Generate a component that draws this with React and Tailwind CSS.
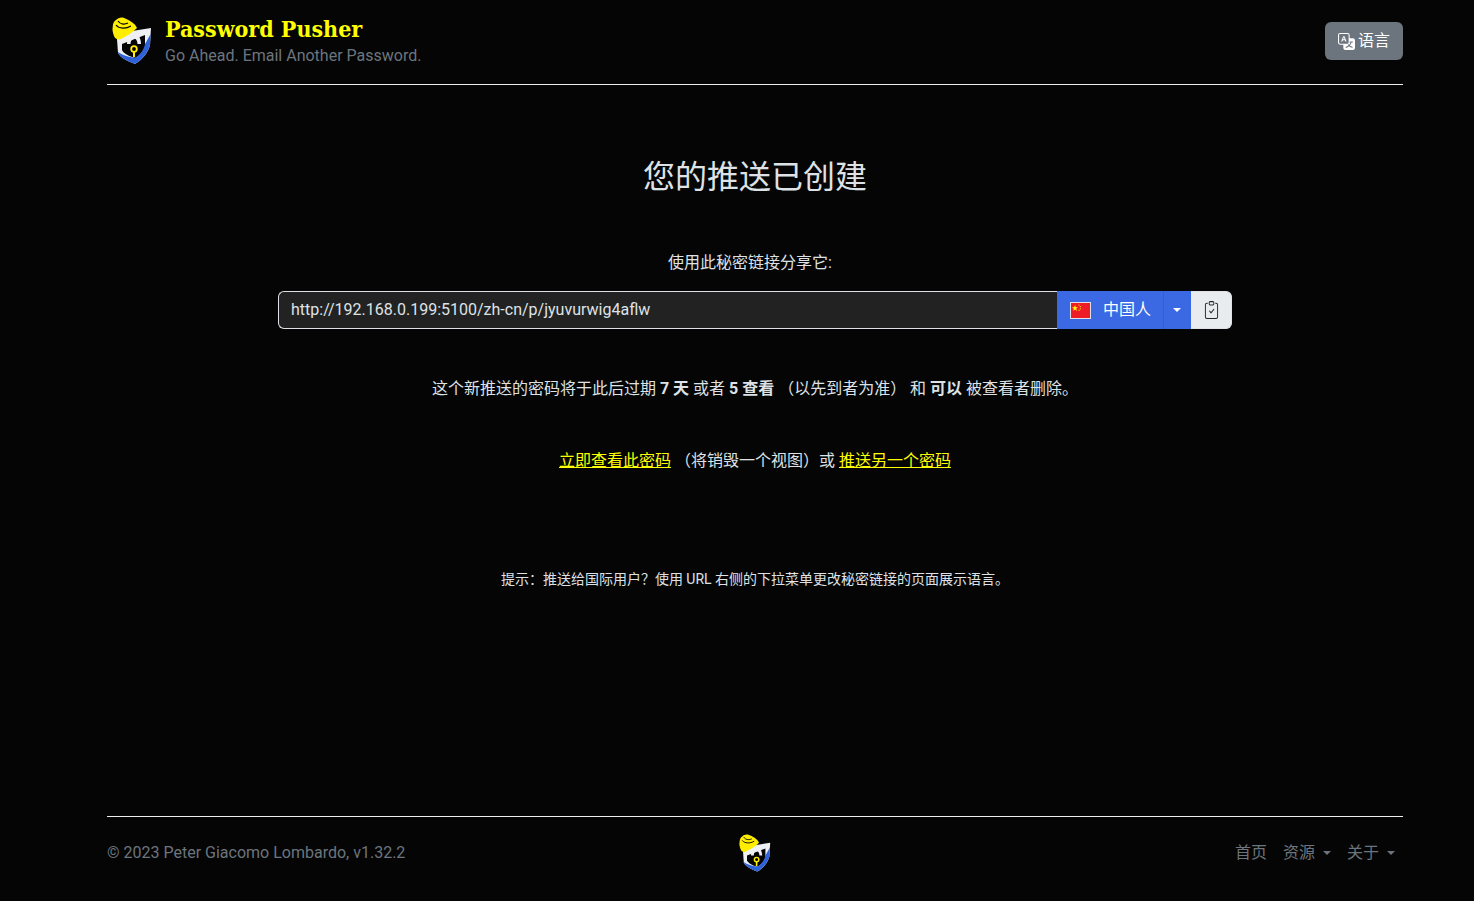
import React from 'react';

const Logo = ({ size }) => (
  <svg width={size} height={size * 1.175} viewBox="0 0 40 47" fill="none">
    {/* shield */}
    <path d="M5 22 L20 14 L39 11 L38 28 C36 36 30 43 23 47 C15 44 9 41 6 36 Z" fill="#eef0f4" />
    <path d="M10 27 L33 18 L33 30 C31 35 27 39 23 41 C17 39 12 37 10 33 Z" fill="#050505" />
    {/* blue swoosh */}
    <path d="M6 35 C10 38 17 40 23 41 C28 38 32 33 33 27 L38.6 17 L38 28 C36 36 30 43 23 47 C15 44 9 41 6 36 Z" fill="#2f62d9" />
    {/* padlock */}
    <path d="M15 27 C15 13 29 13 29 27 L25.5 27 C25.5 19.5 18.5 19.5 18.5 27 Z" fill="#eef0f3" />
    <circle cx="22" cy="32" r="2.8" stroke="#ffee00" strokeWidth="1.8" fill="none" />
    <rect x="21" y="34" width="2" height="6" fill="#ffee00" />
    {/* flame */}
    <path d="M0.7 10 C1 6 2 4 4 3 C6 1 9 0 12 1 C17 3 23 6 25 11 C21 15 15 19 9 22 C6 23 3 22 2 19 C1 16 0 13 0.7 10 Z" fill="#ffee00" />
    <path d="M6 4 C8 7 12 8 16 6 M4 8 C7 12 14 12 19 9" stroke="#050505" strokeWidth="1.2" fill="none" />
  </svg>
);

const Flag = () => (
  <svg width="19" height="15" viewBox="0 0 19 15" className="shrink-0">
    <rect width="19" height="15" fill="#ee1c25" />
    <polygon points="4,2 4.8,4.3 7,4.3 5.2,5.7 5.9,8 4,6.6 2.1,8 2.8,5.7 1,4.3 3.2,4.3" fill="#ffff00" />
    <circle cx="8" cy="2" r="0.6" fill="#ffff00" />
    <circle cx="9.3" cy="3.6" r="0.6" fill="#ffff00" />
    <circle cx="9.3" cy="5.8" r="0.6" fill="#ffff00" />
    <circle cx="8" cy="7.2" r="0.6" fill="#ffff00" />
  </svg>
);

const Caret = ({ color = 'border-t-white' }) => (
  <span className={`inline-block w-0 h-0 border-x-[4px] border-x-transparent border-t-[4px] ${color}`} />
);

const Translate = () => (
  <svg width="17" height="17" viewBox="0 0 16 16" fill="currentColor">
    <path d="M4.545 6.714 4.11 8H3l1.862-5h1.284L8 8H6.833l-.435-1.286H4.545zm1.634-.736L5.5 3.956h-.049l-.679 2.022H6.18z" />
    <path d="M0 2a2 2 0 0 1 2-2h7a2 2 0 0 1 2 2v3h3a2 2 0 0 1 2 2v7a2 2 0 0 1-2 2H7a2 2 0 0 1-2-2v-3H2a2 2 0 0 1-2-2V2zm2-1a1 1 0 0 0-1 1v7a1 1 0 0 0 1 1h7a1 1 0 0 0 1-1V2a1 1 0 0 0-1-1H2zm7.138 9.995c.193.301.402.583.63.846-.748.575-1.673 1.001-2.768 1.292.178.217.451.635.555.867 1.125-.359 2.08-.844 2.886-1.494.777.665 1.739 1.165 2.93 1.472.133-.254.414-.673.629-.89-1.125-.253-2.057-.694-2.82-1.284.681-.747 1.222-1.651 1.621-2.757H14V8h-3v1.047h.765c-.318.844-.74 1.546-1.272 2.13a6.066 6.066 0 0 1-.415-.492 1.988 1.988 0 0 1-.94.31z" />
  </svg>
);

const ClipboardCheck = () => (
  <svg width="15" height="18" viewBox="0 0 16 16" preserveAspectRatio="none" fill="currentColor">
    <path fillRule="evenodd" d="M10.854 7.146a.5.5 0 0 1 0 .708l-3 3a.5.5 0 0 1-.708 0l-1.5-1.5a.5.5 0 1 1 .708-.708L7.5 9.793l2.646-2.647a.5.5 0 0 1 .708 0z" />
    <path d="M4 1.5H3a2 2 0 0 0-2 2V14a2 2 0 0 0 2 2h10a2 2 0 0 0 2-2V3.5a2 2 0 0 0-2-2h-1v1h1a1 1 0 0 1 1 1V14a1 1 0 0 1-1 1H3a1 1 0 0 1-1-1V3.5a1 1 0 0 1 1-1h1v-1z" />
    <path d="M9.5 1a.5.5 0 0 1 .5.5v1a.5.5 0 0 1-.5.5h-3a.5.5 0 0 1-.5-.5v-1a.5.5 0 0 1 .5-.5h3zm-3-1A1.5 1.5 0 0 0 5 1.5v1A1.5 1.5 0 0 0 6.5 4h3A1.5 1.5 0 0 0 11 2.5v-1A1.5 1.5 0 0 0 9.5 0h-3z" />
  </svg>
);

export default function App() {
  return (
    <div className="min-h-[901px] bg-[#050505] text-[#dee2e6] text-base font-['Roboto','Noto_Sans_CJK_SC',sans-serif]">
      <div className="ml-[107px] w-[1296px] h-[901px] flex flex-col">
        <header className="h-[85px] shrink-0 flex items-start justify-between border-b border-[#eceff1]">
          <div className="flex items-start pt-[14px] pl-[5px]">
            <div className="pt-[3px]"><Logo size={40} /></div>
            <div className="ml-[13px]">
              <div className="text-[23px] leading-[29px] font-bold text-[#ffff00] font-['Roboto_Slab','DejaVu_Serif_Condensed','DejaVu_Serif',serif]">
                Password Pusher
              </div>
              <div className="mt-[1px] text-[16px] leading-[24px] text-[#6c757d]">Go Ahead. Email Another Password.</div>
            </div>
          </div>
          <button className="mt-[22px] h-[38px] px-[13px] flex items-center gap-[3px] rounded-[6px] bg-[#6c757d] text-white">
            <Translate />
            <span>语言</span>
          </button>
        </header>

        <main className="flex-1 flex flex-col items-center">
          <h2 className="mt-[71px] text-[32px] leading-[42px] font-normal">您的推送已创建</h2>
          <p className="mt-[53px] pr-[10px] leading-[24px]">使用此秘密链接分享它:</p>
          <div className="mt-[16px] w-[954px] h-[38px] flex">
            <div className="flex-1 flex items-center px-[12px] bg-[#222222] border border-r-0 border-[#dee2e6] rounded-l-[6px]">
              http://192.168.0.199:5100/zh-cn/p/jyuvurwig4aflw
            </div>
            <div className="w-[106px] flex items-center pl-[13px] gap-[12px] bg-[#3b68e3] text-white">
              <span className="border border-[#dee2e6] leading-[0]"><Flag /></span>
              <span>中国人</span>
            </div>
            <div className="w-[28px] flex items-center justify-center pr-[1px] bg-[#3b68e3] border-l border-[#2f5fe0]">
              <Caret />
            </div>
            <div className="w-[41px] flex items-center justify-center bg-[#e9ecef] border border-l-0 border-[#dee2e6] rounded-r-[6px] text-[#212529]">
              <ClipboardCheck />
            </div>
          </div>
          <p className="mt-[48px] leading-[24px]">
            这个新推送的密码将于此后过期 <b>7 天</b> 或者 <b>5 查看</b> （以先到者为准） 和 <b>可以</b> 被查看者删除。
          </p>
          <p className="mt-[48px] leading-[24px]">
            <a className="text-[#ffff00] underline">立即查看此密码</a> （将销毁一个视图）或 <a className="text-[#ffff00] underline">推送另一个密码</a>
          </p>
          <p className="mt-[96px] text-[14px] leading-[21px]">
            提示：推送给国际用户？使用 URL 右侧的下拉菜单更改秘密链接的页面展示语言。
          </p>
        </main>

        <footer className="h-[85px] shrink-0 border-t border-[#eceff1] pb-[12px] flex items-center justify-between text-[#6c757d]">
          <span className="w-[400px]">© 2023 Peter Giacomo Lombardo, v1.32.2</span>
          <Logo size={32} />
          <nav className="w-[400px] flex justify-end items-center">
            <a className="px-[8px]">首页</a>
            <a className="px-[8px] flex items-center gap-[8px]">资源 <Caret color="border-t-[#6c757d]" /></a>
            <a className="px-[8px] flex items-center gap-[8px]">关于 <Caret color="border-t-[#6c757d]" /></a>
          </nav>
        </footer>
      </div>
    </div>
  );
}
